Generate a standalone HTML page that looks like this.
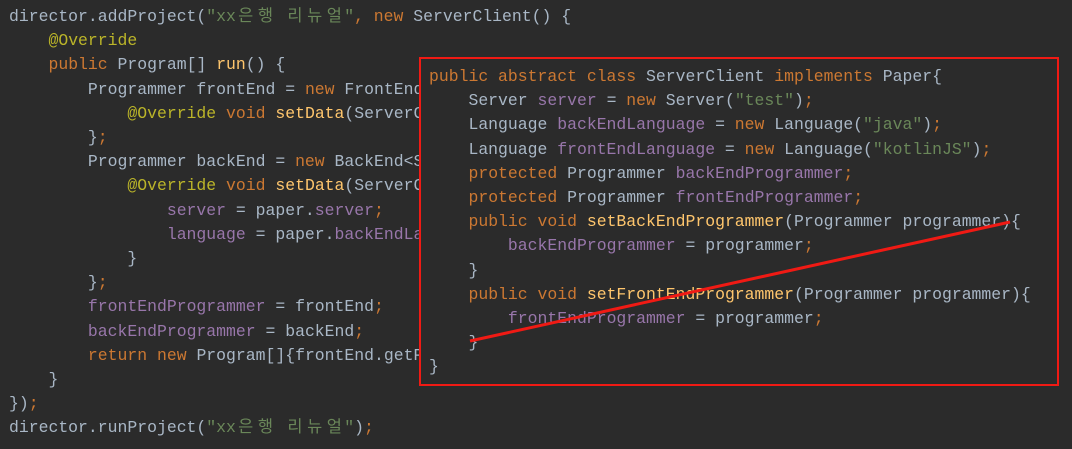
<!DOCTYPE html>
<html><head><meta charset="utf-8"><style>
body{margin:0;width:1072px;height:449px;background:#2b2b2b;overflow:hidden;position:relative}
pre{margin:0;position:absolute;font-family:"Liberation Mono","Noto Sans CJK KR",monospace;font-size:16.45px;line-height:24.2px;color:#a9b7c6;white-space:pre}
.k{color:#cc7832}.s{color:#6a8759}.a{color:#bbb529}.f{color:#9876aa}.m{color:#ffc66d}
.h{display:inline-block;width:19.7px;text-align:center}
#box{position:absolute;left:419px;top:57px;width:636px;height:325px;border:2px solid #f01a14;background:#2b2b2b}
</style></head><body>
<pre style="left:9px;top:5px">director.addProject(<span class="s">"xx<span class="h">은</span><span class="h">행</span> <span class="h">리</span><span class="h">뉴</span><span class="h">얼</span>"</span><span class="k">, new </span>ServerClient() {
    <span class="a">@Override</span>
    <span class="k">public </span>Program[] <span class="m">run</span>() {
        Programmer frontEnd = <span class="k">new </span>FrontEnd&lt;ServerClient&gt;(){
            <span class="a">@Override</span> <span class="k">void </span><span class="m">setData</span>(ServerClient paper){
        }<span class="k">;</span>
        Programmer backEnd = <span class="k">new </span>BackEnd&lt;ServerClient&gt;(){
            <span class="a">@Override</span> <span class="k">void </span><span class="m">setData</span>(ServerClient paper){
                <span class="f">server</span> = paper.<span class="f">server</span><span class="k">;</span>
                <span class="f">language</span> = paper.<span class="f">backEndLanguage</span><span class="k">;</span>
            }
        }<span class="k">;</span>
        <span class="f">frontEndProgrammer</span> = frontEnd<span class="k">;</span>
        <span class="f">backEndProgrammer</span> = backEnd<span class="k">;</span>
        <span class="k">return new </span>Program[]{frontEnd.getProgram()}<span class="k">;</span>
    }
})<span class="k">;</span>
director.runProject(<span class="s">"xx<span class="h">은</span><span class="h">행</span> <span class="h">리</span><span class="h">뉴</span><span class="h">얼</span>"</span>)<span class="k">;</span></pre>
<div id="box"></div>
<pre style="left:429px;top:65px"><span class="k">public abstract class </span>ServerClient <span class="k">implements </span>Paper{
    Server <span class="f">server</span> = <span class="k">new </span>Server(<span class="s">"test"</span>)<span class="k">;</span>
    Language <span class="f">backEndLanguage</span> = <span class="k">new </span>Language(<span class="s">"java"</span>)<span class="k">;</span>
    Language <span class="f">frontEndLanguage</span> = <span class="k">new </span>Language(<span class="s">"kotlinJS"</span>)<span class="k">;</span>
    <span class="k">protected </span>Programmer <span class="f">backEndProgrammer</span><span class="k">;</span>
    <span class="k">protected </span>Programmer <span class="f">frontEndProgrammer</span><span class="k">;</span>
    <span class="k">public void </span><span class="m">setBackEndProgrammer</span>(Programmer programmer){
        <span class="f">backEndProgrammer</span> = programmer<span class="k">;</span>
    }
    <span class="k">public void </span><span class="m">setFrontEndProgrammer</span>(Programmer programmer){
        <span class="f">frontEndProgrammer</span> = programmer<span class="k">;</span>
    }
}</pre>
<svg style="position:absolute;left:0;top:0" width="1072" height="449"><line x1="470" y1="341" x2="1010" y2="222" stroke="#f01a14" stroke-width="3"/></svg>
</body></html>
